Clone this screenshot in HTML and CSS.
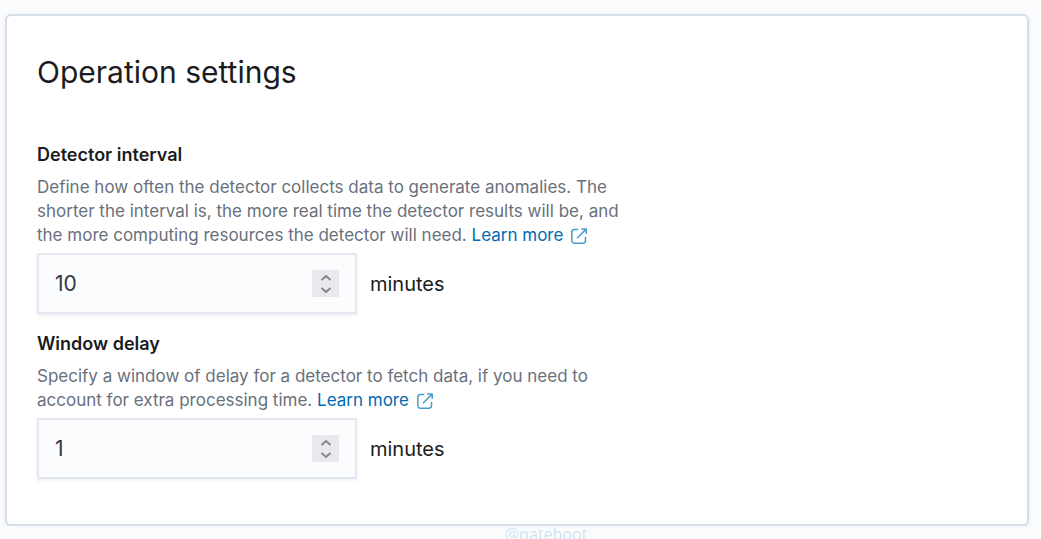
FILE: index.html
```html
<!DOCTYPE html>
<html lang="en">
<head>
<meta charset="utf-8">
<title>Operation settings</title>
<link rel="stylesheet" href="styles.css">
</head>
<body>
<svg class="defs" aria-hidden="true">
  <symbol id="external" viewBox="0 0 16 16">
    <path d="M7.2 1.5H3.5a2.7 2.7 0 0 0-2.7 2.7v8.3a2.7 2.7 0 0 0 2.7 2.7h8.3a2.7 2.7 0 0 0 2.7-2.7V8.8M10.2 1h5v5M14.8 1.4 6 10.2"/>
  </symbol>
  <symbol id="up" viewBox="0 0 12 8"><path d="m1.5 6 4.5-4 4.5 4"/></symbol>
  <symbol id="down" viewBox="0 0 12 8"><path d="m1.5 2 4.5 4 4.5-4"/></symbol>
</svg>
<main class="panel">
  <h1 class="title">Operation settings</h1>
  <form class="form">
    <section class="field">
      <label class="label" for="interval">Detector interval</label>
      <p class="help">Define how often the detector collects data to generate anomalies. The shorter the interval is, the more real time the detector results will be, and the more computing resources the detector will need. <a class="link" href="#">Learn more <svg class="external"><use href="#external"/></svg></a></p>
      <div class="row">
        <div class="control">
          <input class="number" id="interval" type="number" value="10">
          <div class="stepper">
            <button class="step" type="button" aria-label="Increase interval"><svg class="chevron"><use href="#up"/></svg></button>
            <button class="step" type="button" aria-label="Decrease interval"><svg class="chevron"><use href="#down"/></svg></button>
          </div>
        </div>
        <span class="unit">minutes</span>
      </div>
    </section>
    <section class="field">
      <label class="label" for="delay">Window delay</label>
      <p class="help">Specify a window of delay for a detector to fetch data, if you need to account for extra processing time. <a class="link" href="#">Learn more <svg class="external"><use href="#external"/></svg></a></p>
      <div class="row">
        <div class="control">
          <input class="number" id="delay" type="number" value="1">
          <div class="stepper">
            <button class="step" type="button" aria-label="Increase delay"><svg class="chevron"><use href="#up"/></svg></button>
            <button class="step" type="button" aria-label="Decrease delay"><svg class="chevron"><use href="#down"/></svg></button>
          </div>
        </div>
        <span class="unit">minutes</span>
      </div>
    </section>
  </form>
</main>
<div class="watermark">@nateboot</div>
</body>
</html>
```

FILE: styles.css
```css
* { box-sizing: border-box; }
body {
  margin: 0;
  padding: 14px 12px 0 5px;
  background: #fafbfd;
  font-family: Inter, "Liberation Sans", sans-serif;
  color: #1a1c21;
  overflow: hidden;
}
.defs { display: none; }
.panel {
  padding: 38px 30px 45px;
  background: #fff;
  border: 2px solid #d6deec;
  border-radius: 6px;
  box-shadow: 0 2px 4px rgba(152, 162, 179, 0.2);
}
.title { margin: 0; font-size: 30px; line-height: 36px; font-weight: 400; }
.form {
  display: flex;
  flex-direction: column;
  gap: 18px;
  margin-top: 53px;
}
.label { display: block; font-size: 18px; line-height: 24px; font-weight: 600; }
.help {
  max-width: 590px;
  margin: 8px 0 6px;
  font-size: 17px;
  line-height: 24px;
  color: #69707d;
}
.link { color: #006bb4; text-decoration: none; white-space: nowrap; }
.external {
  width: 16px;
  height: 16px;
  margin-left: 3px;
  vertical-align: -3px;
  fill: none;
  stroke: #4a9bcd;
  stroke-width: 1.5;
  stroke-linejoin: round;
}
.row { display: flex; align-items: center; gap: 13px; }
.control {
  display: flex;
  align-items: center;
  width: 320px;
  height: 61px;
  padding: 0 16px;
  background: #fbfcfd;
  border: 2px solid #e4e7f1;
  box-shadow: 0 2px 3px rgba(152, 162, 179, 0.15);
}
.number {
  flex: 1;
  min-width: 0;
  padding: 0;
  border: 0;
  background: none;
  font: inherit;
  font-size: 21px;
  line-height: 28px;
  color: #343741;
  appearance: textfield;
}
.number::-webkit-inner-spin-button { appearance: none; margin: 0; }
.stepper {
  display: flex;
  flex-direction: column;
  justify-content: center;
  gap: 4px;
  width: 27px;
  height: 27px;
  background: #e9e8ec;
}
.step {
  display: flex;
  justify-content: center;
  padding: 0;
  border: 0;
  background: none;
}
.chevron {
  width: 12px;
  height: 8px;
  fill: none;
  stroke: #85858f;
  stroke-width: 2;
}
.unit { font-size: 20px; line-height: 28px; }
.watermark {
  position: fixed;
  left: 505px;
  top: 523px;
  font-family: "Open Sans", sans-serif;
  font-size: 16px;
  line-height: 22px;
  color: #cfe2f0;
}
```
